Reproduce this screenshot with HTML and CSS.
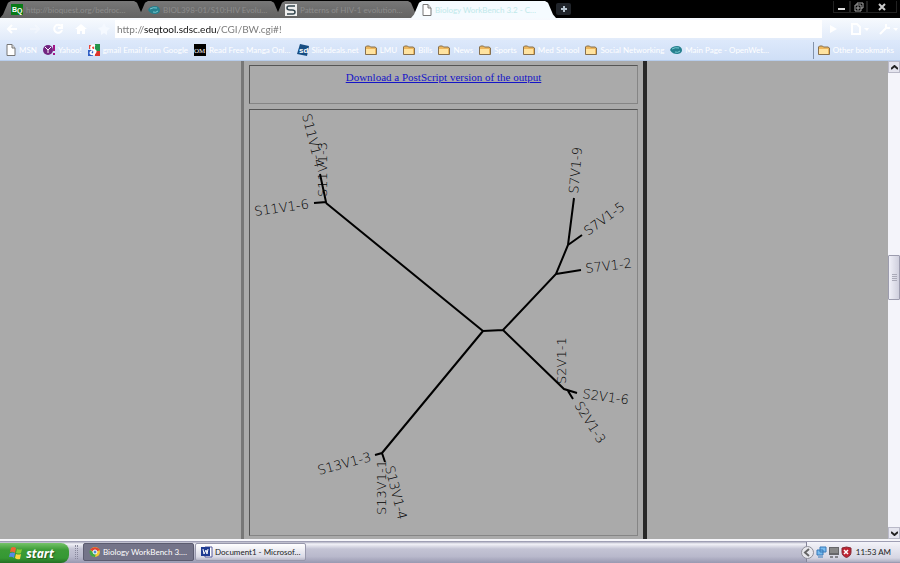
FILE: index.html
```html
<!DOCTYPE html>
<html lang="en">
<head>
<meta charset="utf-8">
<title>Biology WorkBench 3.2</title>
<link rel="stylesheet" href="styles.css">
</head>
<body>
<svg class="defs" aria-hidden="true">
  <symbol id="folder" viewBox="0 0 12 11"><path d="M.5 9.500V2l1-1h3l1 1h4.500l1.500 1v6.500z" fill="#edb75e" stroke="#87704e"/><path d="M1 4h9v5H1z" fill="#ffe3a0"/></symbol>
  <symbol id="page" viewBox="0 0 10 12"><path d="M1 .5h5L9 4v7.500H1z" fill="#fff" stroke="#777"/><path d="M6 .5V4h3" fill="#ddd" stroke="#777"/></symbol>
  <symbol id="wet" viewBox="0 0 12 10"><path d="M0 5C1 2 4 1 7 1c3 0 5 2 5 4 0 3-3 4-5 4-3 0-5-1-7-4z" fill="#25808e"/><path d="M2 4q3-2 7-1M5 7q3 1 5-1" stroke="#79cad2" fill="none"/></symbol>
</svg>
<header>
  <nav class="tabs" aria-label="Tabs">
    <button class="tab"><svg width="12" height="11" viewBox="0 0 12 11"><path fill="#087a17" d="M0 0h12v11H0z"/><text class="bq" x="1" y="8">B</text><text class="bq" x="6" y="9">Q</text></svg><span>http://bioquest.org/bedroc…</span></button>
    <button class="tab"><svg width="12" height="10"><use href="#wet"/></svg><span>BIOL398-01/S10:HIV Evolu…</span></button>
    <button class="tab"><svg width="12" height="12" viewBox="0 0 12 12"><path fill="#eee" d="M0 0h12v12H0z"/><path d="M10 2H4Q2 2 2 4t3 2h2q3 0 3 2t-2 2H2" fill="none" stroke="#34464e" stroke-width="1.500"/></svg><span>Patterns of HIV-1 evolution…</span></button>
    <button class="tab active"><svg width="10" height="12"><use href="#page"/></svg><span>Biology WorkBench 3.2 - C…</span></button>
    <button class="newtab" aria-label="New tab"><svg width="8" height="8" viewBox="0 0 8 8"><path d="M4 1v6M1 4h6" stroke="#b6c3ce" stroke-width="2"/></svg></button>
    <div class="window">
      <button aria-label="Minimize"><svg width="10" height="10" viewBox="0 0 10 10"><path d="M1 7h7" stroke="#ddd" stroke-width="2"/></svg></button>
      <button aria-label="Restore"><svg width="10" height="10" viewBox="0 0 10 10"><path d="M3 3V1h6v5H7M1 3h6v6H1zM3 5h2v2H3z" stroke="#aaa" fill="none"/></svg></button>
      <button class="close" aria-label="Close"><svg width="10" height="10" viewBox="0 0 10 10"><path d="M2 2l6 6M8 2L2 8" stroke="#ccc" stroke-width="2"/></svg></button>
    </div>
  </nav>
  <form class="toolbar">
    <button type="button" aria-label="Back"><svg width="12" height="12" viewBox="0 0 12 12"><path d="M11 6H3M6 2L2 6l4 4" class="ico"/></svg></button>
    <button type="button" aria-label="Forward"><svg width="12" height="12" viewBox="0 0 12 12"><path d="M1 6h8M6 2l4 4-4 4" class="ico dim"/></svg></button>
    <button type="button" aria-label="Reload"><svg width="12" height="12" viewBox="0 0 12 12"><path d="M9 3a4 4 0 1 0 1 4M10 1v4H6" class="ico"/></svg></button>
    <button type="button" aria-label="Home"><svg width="12" height="12" viewBox="0 0 12 12"><path d="M0 6l6-5 6 5h-2v5H7V8H5v3H2V6z" fill="#fff"/></svg></button>
    <button type="button" aria-label="Bookmark"><svg width="12" height="12" viewBox="0 0 12 12"><path d="M6 0l2 4 4 1-3 3v4L6 10l-3 2V8L0 5l4-1z" fill="#f5f9ff"/></svg></button>
    <div class="address"><input aria-label="Address" value="http://seqtool.sdsc.edu/CGI/BW.cgi#!"></div>
    <button type="button" aria-label="Go"><svg width="12" height="12" viewBox="0 0 12 12"><path d="M3 2l7 4-7 4z" fill="#fff"/></svg></button>
    <button type="button" class="wide" aria-label="Page menu"><svg width="20" height="12" viewBox="0 0 20 12"><path d="M2 1h5l3 3v7H2z" class="ico"/><path d="M14 5h5l-2 3z" fill="#fff"/></svg></button>
    <button type="button" class="wide" aria-label="Tools menu"><svg width="20" height="12" viewBox="0 0 20 12"><path d="M1 11l6-6M7 1v4h4" class="ico"/><path d="M14 5h5l-2 3z" fill="#fff"/></svg></button>
  </form>
  <nav class="bookmarks" aria-label="Bookmarks">
    <a href="#"><svg width="10" height="12"><use href="#page"/></svg>MSN</a>
    <a href="#"><svg width="12" height="12" viewBox="0 0 12 12"><circle cx="5" cy="6" r="5" fill="#722581"/><path d="M2 3l3 3 3-3M5 6v3" stroke="#fff" fill="none"/><path d="M11 1v6M11 9v2" stroke="#a11688" stroke-width="2"/></svg>Yahoo!</a>
    <a href="#"><svg width="12" height="12" viewBox="0 0 12 12"><path fill="#e8473a" d="M1 1h5v4H1z"/><path fill="#22954b" d="M7 0h5v7H7z"/><path fill="#315fc4" d="M0 6h5v6H0z"/><path fill="#dc352c" d="M7 7h5v5H7z"/><path d="M7 2c-5-2-5 4-1 4 3 1 1 3 0 4-3 1-5-1-2-3" stroke="#fff" stroke-width="2" fill="none"/></svg>gmail Email from Google</a>
    <a href="#"><svg width="12" height="12" viewBox="0 0 12 12"><path d="M0 0h12v12H0z"/><text class="om" x="0" y="9">OM</text></svg>Read Free Manga Onl…</a>
    <a href="#"><svg width="12" height="12" viewBox="0 0 12 12"><path fill="#174d83" d="M3 0l9 2-2 10-10-2z"/><text class="sd" x="2" y="9">sd</text></svg>Slickdeals.net</a>
    <a href="#"><svg width="12" height="11"><use href="#folder"/></svg>LMU</a>
    <a href="#"><svg width="12" height="11"><use href="#folder"/></svg>Bills</a>
    <a href="#"><svg width="12" height="11"><use href="#folder"/></svg>News</a>
    <a href="#"><svg width="12" height="11"><use href="#folder"/></svg>Sports</a>
    <a href="#"><svg width="12" height="11"><use href="#folder"/></svg>Med School</a>
    <a href="#"><svg width="12" height="11"><use href="#folder"/></svg>Social Networking</a>
    <a href="#"><svg width="12" height="10"><use href="#wet"/></svg>Main Page - OpenWet…</a>
    <a href="#" class="other"><svg width="12" height="11"><use href="#folder"/></svg>Other bookmarks</a>
  </nav>
</header>
<div class="view">
  <main>
    <div class="frame">
      <section class="cell download"><a href="#">Download a PostScript version of the output</a></section>
      <section class="cell tree">
        <svg viewBox="250 110 387 425" role="img" aria-label="Unrooted tree">
          <path class="branch" d="M314 203l12-1-6-28M326 203l157 128 20-1 53-56 12-29 6-47M568 245l14-10M556 274l25-4M503 330l61 59 13 4M568 391l5 8M483 331l-101 122-7 2M382 453l3 9"/>
          <text transform="translate(255 216) rotate(-8)">S11V1-6</text>
          <text transform="translate(302 115) rotate(76)">S11V1-4</text>
          <text transform="translate(327 197) rotate(-90)">S11V1-3</text>
          <text transform="translate(578 194) rotate(-85)">S7V1-9</text>
          <text transform="translate(588 236) rotate(-36)">S7V1-5</text>
          <text transform="translate(586 273) rotate(-7)">S7V1-2</text>
          <text transform="translate(566 384) rotate(-90)">S2V1-1</text>
          <text transform="translate(582 398) rotate(8)">S2V1-6</text>
          <text transform="translate(574 405) rotate(58)">S2V1-3</text>
          <text transform="translate(319 475) rotate(-15)">S13V1-3</text>
          <text transform="translate(386 515) rotate(-90)">S13V1-1</text>
          <text transform="translate(385 467) rotate(76)">S13V1-4</text>
        </svg>
      </section>
    </div>
  </main>
  <div class="scroll">
    <button aria-label="Scroll up"><svg width="7" height="5" viewBox="0 0 7 5"><path d="M0 4l3.500-3L7 4" class="arrow"/></svg></button>
    <div class="track"><div class="thumb"><svg width="5" height="7" viewBox="0 0 5 7"><path d="M0 .5h5M0 2.500h5M0 4.500h5M0 6.500h5" stroke="#aaaab8"/></svg></div></div>
    <button aria-label="Scroll down"><svg width="7" height="5" viewBox="0 0 7 5"><path d="M0 1l3.500 3L7 1" class="arrow"/></svg></button>
  </div>
</div>
<footer class="taskbar">
  <button class="start"><svg width="14" height="14" viewBox="0 0 14 14"><path d="M2 2q2-2 5 0L6 7Q4 5 1 6z" fill="#ee6534"/><path d="M8 3q3 1 5 0l-1 4q-2 1-5 0z" fill="#86cc35"/><path d="M1 7q3-1 5 0l-1 5q-2-2-5-1z" fill="#568be6"/><path d="M7 8q3 1 5 0l-1 5q-3 1-5-1z" fill="#ffd440"/></svg>start</button>
  <span class="grip"></span>
  <button class="task current"><svg width="12" height="12" viewBox="0 0 12 12"><circle cx="6" cy="6" r="5" fill="#f3c934"/><path d="M1 4a6 6 0 0 1 10 0L6 6z" fill="#df4435"/><path d="M1 4a5 5 0 0 0 5 7l1-4-3-1z" fill="#42a845"/><circle cx="6" cy="6" r="2" fill="#4f8edb" stroke="#fff"/></svg>Biology WorkBench 3.…</button>
  <button class="task"><svg width="12" height="12" viewBox="0 0 12 12"><path d="M4 1h7v10H4z" fill="#fff" stroke="#565a9a"/><path d="M0 1h9v9H0z" fill="#203c92"/><path d="M2 3l1 5 2-4 1 4 1-5" stroke="#fff" fill="none"/></svg>Document1 - Microsof…</button>
  <div class="tray">
    <button class="chev" aria-label="Show hidden icons"><svg width="13" height="13" viewBox="0 0 13 13"><circle cx="6.500" cy="6.500" r="6" fill="#e8e8ed" stroke="#8e8e98"/><path d="M8 3L4 6.500 8 10" fill="none" stroke="#666" stroke-width="2"/></svg></button>
    <svg width="11" height="12" viewBox="0 0 11 12"><path d="M4 1h6v5H4zM1 4h6v5H1z" fill="#78bcf0" stroke="#3779b8"/><path d="M2 11h5" stroke="#3779b8"/></svg>
    <svg width="10" height="12" viewBox="0 0 10 12"><path d="M0 1h10v8H0z" fill="#67676a"/><path d="M1 2h8v5H1z" fill="#888"/><path d="M1 11h3M6 11h3" stroke="#333"/></svg>
    <svg width="11" height="12" viewBox="0 0 11 12"><path d="M1 2l4.500-1L10 2v4q0 4-4.500 5.500Q1 10 1 6z" fill="#bf2432" stroke="#842733"/><path d="M3 4l4 4M7 4L3 8" stroke="#fff" stroke-width="1.500"/></svg>
    <time>11:53 AM</time>
  </div>
</footer>
</body>
</html>
```
FILE: styles.css
```css
* { box-sizing: border-box; }
body { margin: 0; height: 100vh; display: flex; flex-direction: column; overflow: hidden; background: #aaa; font-family: Lato, "Noto Sans", sans-serif; font-size: 8px; }
button { border: 0; padding: 0; background: none; font: inherit; color: inherit; display: flex; align-items: center; justify-content: center; }
svg { flex: none; display: block; }
.defs { position: absolute; width: 0; height: 0; }

.tabs { height: 18px; display: flex; background: #000; padding-top: 1px; }
.tab { width: 145px; margin-right: -8px; padding: 0 8px 0 11px; gap: 3px; justify-content: flex-start; background: linear-gradient(#777, #636363); color: #8c8c8c; clip-path: polygon(0 100%, 3px 80%, 8px 10%, 11px 0, 134px 0, 137px 10%, 142px 80%, 100% 100%); white-space: nowrap; }
.tab.active { background: #f5fbff; color: #bfe9ea; }
.bq { font: bold 7px "Liberation Sans", sans-serif; fill: #fff; }
.newtab { width: 15px; height: 12px; margin: 2px 0 0 8px; background: #20242a; border-radius: 2px; }
.window { margin-left: auto; display: flex; height: 12px; padding-right: 3px; }
.window button { width: 17px; border: 1px solid #222; border-top: 0; }
.window .close { width: 30px; }

.toolbar { height: 22px; display: flex; align-items: center; gap: 11px; background: linear-gradient(#f7fafe, #e1ebfa); padding: 0 3px 0 6px; }
.toolbar button { width: 12px; }
.toolbar .wide { width: 20px; margin-right: -2px; }
.ico { fill: none; stroke: #fff; stroke-width: 2; }
.dim { opacity: .3; }
.address { flex: 1; height: 18px; margin: 0 -6px; background: #fff; display: flex; }
.address input { flex: 1; min-width: 0; border: 0; padding: 0 2px; outline: 0; font: 10px Lato, sans-serif; color: transparent; background: linear-gradient(90deg, #777 29px, #111 29px, #111 103px, #777 103px); -webkit-background-clip: text; background-clip: text; }

.bookmarks { height: 21px; display: flex; align-items: center; gap: 6px; padding: 0 6px; background: linear-gradient(#dde9fb, #cfdff6); border-bottom: 1px solid #b7cdec; white-space: nowrap; }
.bookmarks a { display: flex; align-items: center; gap: 3px; color: #fff; text-decoration: none; }
.bookmarks .other { margin-left: auto; height: 17px; padding-left: 4px; border-left: 1px solid #8493aa; }
.om { font: 7px "Liberation Serif", serif; fill: #fff; }
.sd { font: bold 8px "Liberation Sans", sans-serif; fill: #fff; }

.view { flex: 1; min-height: 0; display: flex; }
main { flex: 1; display: flex; justify-content: center; overflow: hidden; }
.frame { width: 406px; border: solid #777; border-width: 0 4px 0 3px; border-right-color: #282828; padding: 4px 5px 0; display: flex; flex-direction: column; gap: 5px; }
.cell { border: 1px solid; border-color: #555 #858585 #858585 #555; }
.download { height: 39px; padding-top: 4px; text-align: center; font: 11px/14px "Liberation Serif", serif; }
.download a { color: #1414c8; }
.tree svg { width: 100%; }
.tree text { font: 200 13px "DejaVu Sans", sans-serif; fill: #000; }
.branch { fill: none; stroke: #000; stroke-width: 2; }

.scroll { width: 12px; display: flex; flex-direction: column; background: #f4f4fa; }
.scroll button { height: 12px; background: #e4e4ee; border: 1px solid #b9b9c8; }
.arrow { fill: none; stroke: #222; stroke-width: 2; }
.track { flex: 1; display: grid; grid-template-rows: 40fr 10fr 50fr; }
.thumb { grid-row: 2; display: flex; align-items: center; justify-content: center; background: linear-gradient(90deg, #f0f0f8, #cfcfdd); border: 1px solid #9c9cae; border-radius: 1px; }

.taskbar { height: 24px; display: flex; align-items: center; border-top: 2px solid #f6f6fa; background: linear-gradient(#8e8ea6 0, #f2f2f8 3px, #c3c3d4 8px, #b9b9cc 70%, #9999b1); }
.start { width: 69px; height: 20px; align-self: flex-end; gap: 3px; color: #fff; font: italic bold 12px "Open Sans", sans-serif; text-shadow: 1px 1px 1px #245a20; border-radius: 0 8px 8px 0; background: linear-gradient(#75c36a, #3b9b36 35%, #359833 75%, #246f23); padding-right: 6px; }
.grip { width: 3px; height: 14px; margin: 0 5px 0 6px; border: dotted #88889c; border-width: 0 1px; }
.task { width: 111px; height: 18px; margin-right: 1px; padding: 0 2px 0 5px; gap: 2px; justify-content: flex-start; white-space: nowrap; color: #222; background: linear-gradient(#fff, #dadae6 80%, #b8b8c8); border: 1px solid #9898ac; border-radius: 2px; }
.task.current { background: #747489; color: #fff; border-color: #5c5c70; }
.tray { margin-left: auto; height: 20px; display: flex; align-items: center; gap: 2px; padding-right: 9px; border-left: 1px solid #85859a; background: linear-gradient(#f3f3f9, #d6d6e3 80%, #adadc0); color: #222; }
.chev { margin-left: -6px; }
.tray time { margin-left: 2px; }
```
